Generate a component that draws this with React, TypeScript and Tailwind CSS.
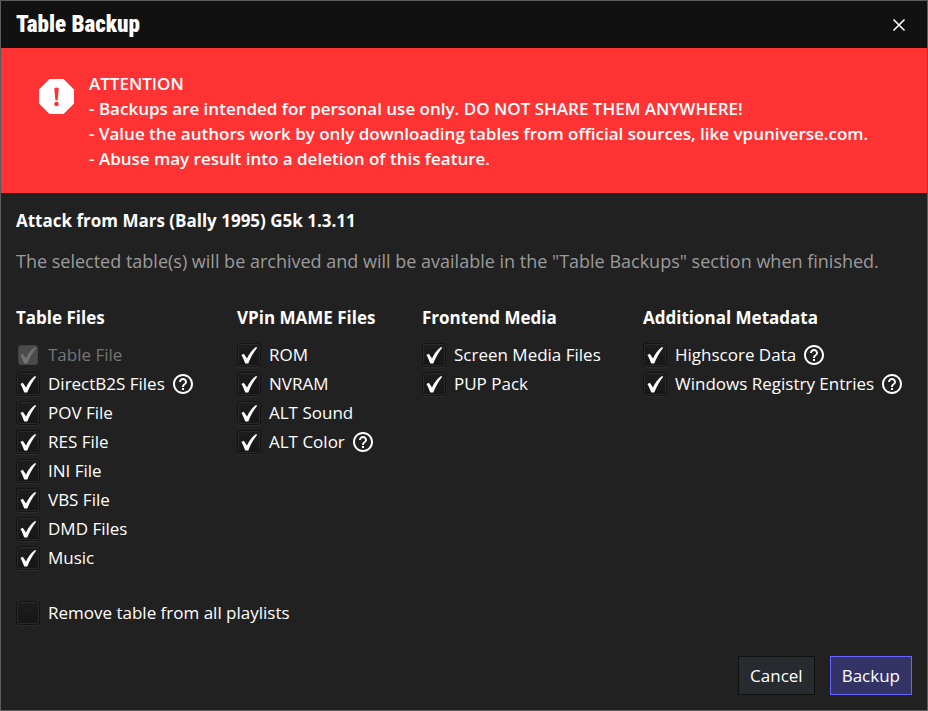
import { useId, useState } from "react";

type Option = { label: string; help?: string; disabled?: boolean };
type Group = { title: string; width: string; options: Option[] };

const groups: Group[] = [
  {
    title: "Table Files",
    width: "w-[221px]",
    options: [
      { label: "Table File", disabled: true },
      { label: "DirectB2S Files", help: "Help for DirectB2S Files" },
      { label: "POV File" },
      { label: "RES File" },
      { label: "INI File" },
      { label: "VBS File" },
      { label: "DMD Files" },
      { label: "Music" },
    ],
  },
  {
    title: "VPin MAME Files",
    width: "w-[185px]",
    options: [
      { label: "ROM" },
      { label: "NVRAM" },
      { label: "ALT Sound" },
      { label: "ALT Color", help: "Help for ALT Color" },
    ],
  },
  {
    title: "Frontend Media",
    width: "w-[221px]",
    options: [{ label: "Screen Media Files" }, { label: "PUP Pack" }],
  },
  {
    title: "Additional Metadata",
    width: "",
    options: [
      { label: "Highscore Data", help: "Help for Highscore Data" },
      { label: "Windows Registry Entries", help: "Help for Windows Registry Entries" },
    ],
  },
];

function HelpIcon({ title }: { title: string }) {
  return (
    <svg viewBox="0 0 24 24" className="ml-1.5 size-6 shrink-0 fill-white" role="img" aria-label={title}>
      <path d="M11 18h2v-2h-2v2zm1-16C6.48 2 2 6.48 2 12s4.48 10 10 10 10-4.48 10-10S17.52 2 12 2zm0 18c-4.41 0-8-3.59-8-8s3.59-8 8-8 8 3.59 8 8-3.59 8-8 8zm0-14c-2.21 0-4 1.79-4 4h2c0-1.1.9-2 2-2s2 .9 2 2c0 2-3 1.75-3 5h2c0-2.25 3-2.5 3-5 0-2.21-1.79-4-4-4z" />
    </svg>
  );
}

function CheckOption({ label, help, disabled = false, initial = true }: Option & { initial?: boolean }) {
  const id = useId();
  const [checked, setChecked] = useState(initial);
  return (
    <div className="flex h-[29px] items-center whitespace-nowrap">
      <span className="grid size-6 shrink-0 place-items-center">
        <input
          id={id}
          type="checkbox"
          checked={checked}
          disabled={disabled}
          onChange={(e) => setChecked(e.target.checked)}
          className="col-start-1 row-start-1 size-6 appearance-none rounded-[3px] border border-[#131313] bg-linear-to-b from-[#1d1d1d] to-[#161616] shadow-[inset_0_0_0_1px_#2a2a2a,0_1px_0_#2d2d2d] disabled:size-5 disabled:border-[#444444] disabled:bg-[#4b4b4b] disabled:bg-none disabled:shadow-none"
        />
        {checked && (
          <svg
            viewBox="0 0 24 24"
            aria-hidden="true"
            className={`pointer-events-none col-start-1 row-start-1 size-6 ${disabled ? "fill-[#747474]" : "fill-white"}`}
          >
            <path d="M4.4 12 L6.8 10.8 L10 15.4 C12.3 10.6 15 7 19 4 L20.2 4.8 C16.6 9.2 13.8 14.2 11.3 20.6 L8.3 20.6 C7.2 17.6 6.1 14.8 4.4 12 Z" />
          </svg>
        )}
      </span>
      <label htmlFor={id} className={`pl-2 ${disabled ? "text-[#757575]" : "text-white"}`}>
        {label}
      </label>
      {help && <HelpIcon title={help} />}
    </div>
  );
}

export default function App() {
  return (
    <main className="flex min-h-screen flex-col border border-[#5c5c5c] bg-[#212121] font-['Segoe_UI','Open_Sans',sans-serif] text-[17px] leading-[25px] text-white">
      <header className="flex h-[47px] items-center justify-between bg-[#111111] pr-5 pl-[15px]">
        <h1 className="font-['Impact','Roboto_Condensed','Roboto',sans-serif] text-[23px] font-black">Table Backup</h1>
        <button type="button" aria-label="Close" className="p-px">
          <svg viewBox="0 0 14 14" className="size-[14px] stroke-white" fill="none" strokeWidth="1.6">
            <path d="M1.5 1.5 L12.5 12.5 M12.5 1.5 L1.5 12.5" />
          </svg>
        </button>
      </header>

      <section className="flex gap-[11px] bg-[#ff3333] pt-[23px] pb-[22px] pl-[35px] font-semibold">
        <svg viewBox="0 0 42 42" className="mt-1 size-[42px] shrink-0" aria-hidden="true">
          <path
            d="M13.5 4 H27.5 L38 14.5 V28.5 L27.5 39 H13.5 L3 28.5 V14.5 Z"
            fill="#ffffff"
          />
          <path d="M18.3 13.5 Q20.5 11.5 22.8 13.5 L21.7 25.2 H19.4 Z" fill="#ff3333" />
          <circle cx="20.5" cy="29" r="2.3" fill="#ff3333" />
        </svg>
        <div>
          <h2>ATTENTION</h2>
          <p>- Backups are intended for personal use only. DO NOT SHARE THEM ANYWHERE!</p>
          <p>- Value the authors work by only downloading tables from official sources, like vpuniverse.com.</p>
          <p>- Abuse may result into a deletion of this feature.</p>
        </div>
      </section>

      <form className="flex grow flex-col px-[15px] pt-[15px] pb-[15px]" onSubmit={(e) => e.preventDefault()}>
        <h2 className="font-bold">Attack from Mars (Bally 1995) G5k 1.3.11</h2>
        <p className="mt-4 text-lg leading-[25px] text-[#9b9b9b]">
          The selected table(s) will be archived and will be available in the "Table Backups" section when finished.
        </p>

        <div className="mt-[31px] flex">
          {groups.map((group) => (
            <fieldset key={group.title} className={`shrink-0 ${group.width}`}>
              <legend className="mb-[10px] font-bold whitespace-nowrap">{group.title}</legend>
              {group.options.map((option) => (
                <CheckOption key={option.label} {...option} />
              ))}
            </fieldset>
          ))}
        </div>

        <div className="mt-[26px]">
          <CheckOption label="Remove table from all playlists" initial={false} />
        </div>

        <div className="mt-auto flex justify-end gap-[15px] pt-4">
          <button type="button" className="h-[39px] border border-[#101010] bg-[#272b2f] px-[11px]">
            Cancel
          </button>
          <button type="submit" className="h-[39px] border border-[#6666ff] bg-[#333366] px-[11px]">
            Backup
          </button>
        </div>
      </form>
    </main>
  );
}
